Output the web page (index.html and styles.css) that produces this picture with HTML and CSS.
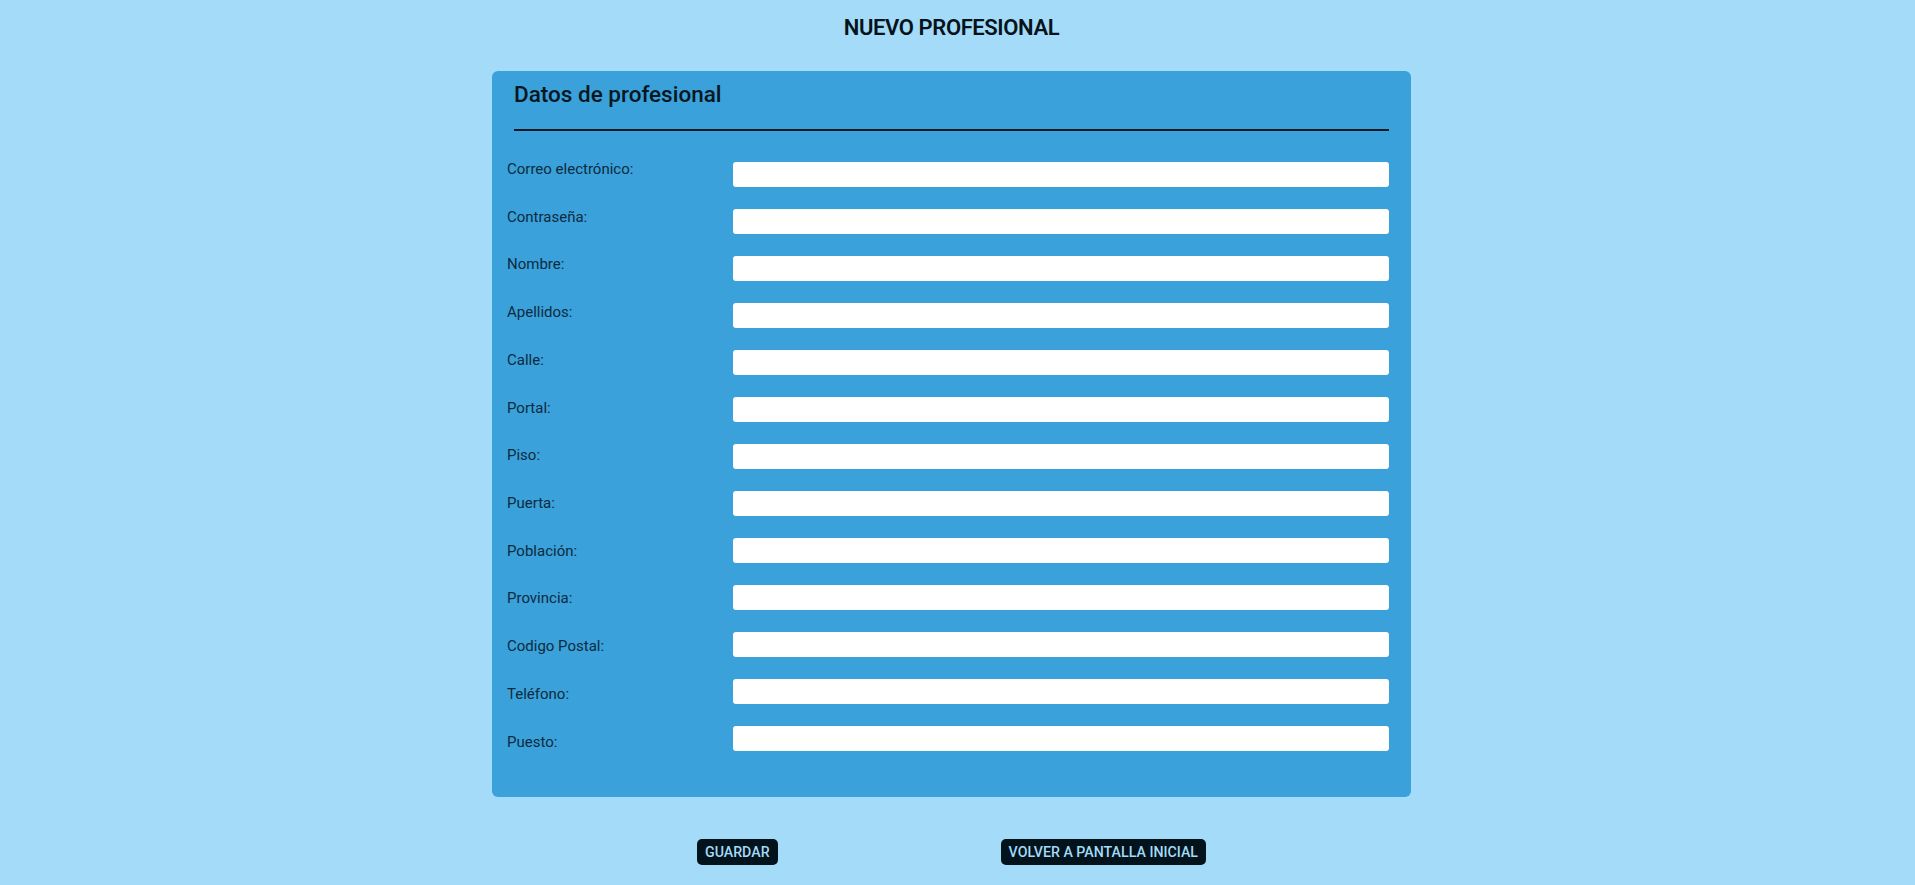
FILE: index.html
```html
<!DOCTYPE html>
<html lang="es">
<head>
<meta charset="utf-8">
<title>Nuevo profesional</title>
<link rel="stylesheet" href="styles.css">
</head>
<body>
<div class="page">
  <h1 class="title">NUEVO PROFESIONAL</h1>
  <section class="panel">
    <div class="panel-head">
      <h2 class="panel-title">Datos de profesional</h2>
    </div>
    <form class="form">
      <div class="labels">
        <label class="label">Correo electrónico:</label>
        <label class="label">Contraseña:</label>
        <label class="label">Nombre:</label>
        <label class="label">Apellidos:</label>
        <label class="label">Calle:</label>
        <label class="label">Portal:</label>
        <label class="label">Piso:</label>
        <label class="label">Puerta:</label>
        <label class="label">Población:</label>
        <label class="label">Provincia:</label>
        <label class="label">Codigo Postal:</label>
        <label class="label">Teléfono:</label>
        <label class="label">Puesto:</label>
      </div>
      <div class="fields">
        <input class="field" type="email">
        <input class="field" type="password">
        <input class="field" type="text">
        <input class="field" type="text">
        <input class="field" type="text">
        <input class="field" type="text">
        <input class="field" type="text">
        <input class="field" type="text">
        <input class="field" type="text">
        <input class="field" type="text">
        <input class="field" type="text">
        <input class="field" type="text">
        <input class="field" type="text">
      </div>
    </form>
  </section>
  <div class="actions">
    <button class="btn" type="button">GUARDAR</button>
    <button class="btn" type="button">VOLVER A PANTALLA INICIAL</button>
  </div>
</div>
</body>
</html>
```
FILE: styles.css
```css
html, body {
  margin: 0;
  padding: 0;
}
body {
  background: #a3dbf8;
  font-family: Roboto, "Liberation Sans", sans-serif;
  color: #0a1c28;
}
.page {
  display: flex;
  flex-direction: column;
  align-items: center;
  padding: 14px 12px 0 0;
}
.title {
  margin: 0 0 29px;
  font-size: 22px;
  line-height: 28px;
  font-weight: 600;
  letter-spacing: -0.4px;
  color: #06131b;
}
.panel {
  width: 919px;
  box-sizing: border-box;
  background: #3aa1da;
  border-radius: 6px;
  padding: 0 22px 46px 15px;
}
.panel-head {
  margin-left: 7px;
  padding-top: 9px;
  border-bottom: 2px solid #0a1a24;
}
.panel-title {
  margin: 0 0 21px;
  font-size: 22.5px;
  line-height: 28px;
  font-weight: 500;
  letter-spacing: 0;
  color: #071722;
}
.form {
  display: flex;
}
.labels {
  width: 226px;
  display: flex;
  flex-direction: column;
  padding-top: 29px;
}
.label {
  display: block;
  height: 18px;
  line-height: 18px;
  font-size: 15px;
  margin-bottom: 29.73px;
  color: #0d2b40;
}
.label:last-child {
  margin-bottom: 0;
}
.fields {
  flex: 1;
  display: flex;
  flex-direction: column;
  padding-top: 31px;
}
.field {
  height: 25px;
  box-sizing: border-box;
  border: none;
  border-radius: 3px;
  background: #fff;
  margin: 0 0 22px;
  padding: 0 6px;
}
.field:last-child {
  margin-bottom: 0;
}
.actions {
  display: flex;
  gap: 223px;
  margin-top: 42px;
}
.btn {
  height: 26px;
  padding: 0 8px;
  border: none;
  border-radius: 5px;
  background: #03131b;
  color: #a3dbf8;
  font-family: Roboto, "Liberation Sans", sans-serif;
  font-size: 14.2px;
  font-weight: 500;
  letter-spacing: 0;
  line-height: 26px;
}
```
